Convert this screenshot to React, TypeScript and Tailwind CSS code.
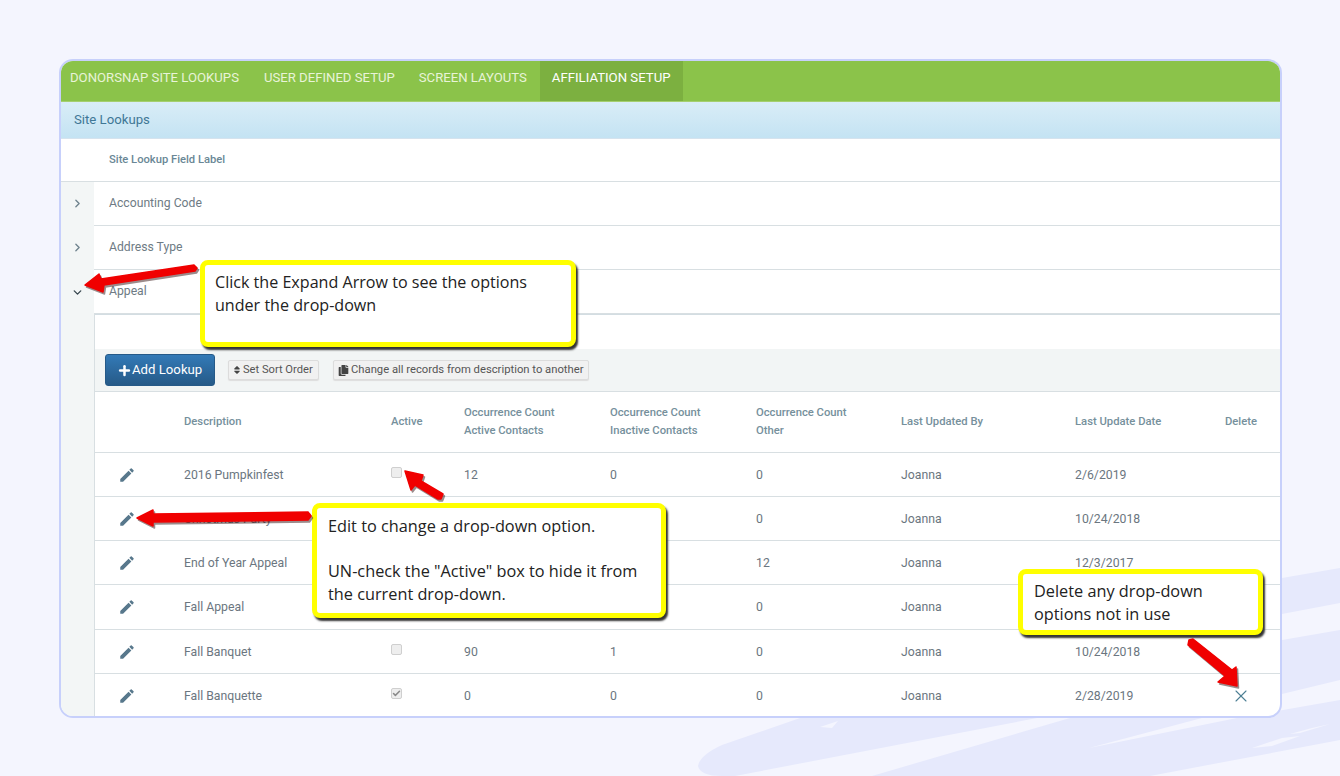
import React from 'react'
import { Check, ChevronDown, ChevronRight, Plus, X } from 'lucide-react'
import { FaCopy, FaSort } from 'react-icons/fa'
import { MdEdit } from 'react-icons/md'

const gridCols = 'grid grid-cols-[89px_207px_73px_146px_146px_145px_174px_150px_1fr] items-center'

const tabs = [
  { label: 'DONORSNAP SITE LOOKUPS', className: 'pl-[9px] pr-[13px]' },
  { label: 'USER DEFINED SETUP', className: 'px-3' },
  { label: 'SCREEN LAYOUTS', className: 'pl-3 pr-[13px]' },
]

// cells left empty are the ones the callouts sit on in the picture
const rows = [
  { name: '2016 Pumpkinfest', box: true, active: false, a: '12', b: '0', c: '0', date: '2/6/2019', h: 'h-[44px]' },
  { name: 'Christmas Party', box: false, active: false, a: '', b: '', c: '0', date: '10/24/2018', h: 'h-[44px]' },
  { name: 'End of Year Appeal', box: false, active: false, a: '', b: '', c: '12', date: '12/3/2017', h: 'h-[44px]' },
  { name: 'Fall Appeal', box: false, active: false, a: '', b: '', c: '0', date: '', h: 'h-[45px]' },
  { name: 'Fall Banquet', box: true, active: false, a: '90', b: '1', c: '0', date: '10/24/2018', h: 'h-[44px]' },
  { name: 'Fall Banquette', box: true, active: true, a: '0', b: '0', c: '0', date: '2/28/2019', h: 'h-[44px]', del: true },
]

function Arrow({ points }: { points: string }) {
  return (
    <>
      <polygon points={points} fill="#3a1a1a" opacity="0.5" transform="translate(1.5 2)" stroke="#3a1a1a" strokeWidth="1.5" strokeLinejoin="round" />
      <polygon points={points} fill="#f00000" stroke="#f00000" strokeWidth="1.5" strokeLinejoin="round" />
    </>
  )
}

function Callout({ className, children }: { className: string; children: React.ReactNode }) {
  return (
    <div className={`absolute z-20 rounded-lg border-[5px] border-[#ffff00] bg-white font-['Open_Sans',sans-serif] leading-[22.7px] text-[#222] shadow-[2px_3px_2px_#333] ${className}`}>
      {children}
    </div>
  )
}

function CheckBox({ checked }: { checked: boolean }) {
  return (
    <span className="-mt-[6px] flex h-[11px] w-[11px] items-center justify-center rounded-[2px] border border-[#cfcfcf] bg-[#eeeeee]">
      {checked && <Check size={9} strokeWidth={4} className="text-[#8a8a8a]" />}
    </span>
  )
}

export default function App() {
  return (
    <div className="relative h-[776px] w-[1340px] overflow-hidden bg-[#f4f5fe] px-[59px] pt-[59px] font-['Roboto',sans-serif]">
      {/* background brush strokes */}
      <svg className="absolute left-0 top-0" width="1340" height="776" viewBox="0 0 1340 776">
        <path d="M803 717 L722 745 Q700 755 698 766 Q700 776 722 776 L735 776 L1037 718 Z" fill="#e6e9fc" />
        <path d="M1070 718 L872 776 L1094 776 L1150 776 L1340 740 L1340 700 L1237 718 L1089 748 L1202 718 Z" fill="#e6e9fc" />
        <path d="M1282 578 L1340 568 L1340 603 L1282 614 Z" fill="#e6e9fc" />
        <path d="M1282 640 L1340 630 L1340 680 L1282 694 Z" fill="#e6e9fc" />
        <path d="M1252 748 L1282 738 L1300 736 L1272 746 Z M1290 734 L1312 728 L1330 724 L1300 733 Z M820 727 L838 721 L832 728 Z" fill="#f4f5fe" />
      </svg>

      {/* main card */}
      <div className="relative z-10 flex h-[659px] w-[1223px] flex-col overflow-hidden rounded-[14px] border-2 border-[#c7d0fb] bg-white">
        <div className="flex h-[41px] shrink-0 border-b border-[#a5cf6f] bg-[#8bc34a] text-[13.15px]">
          {tabs.map((t) => (
            <div key={t.label} className={`flex items-center pb-[7px] text-[#e8f3d8] ${t.className}`}>{t.label}</div>
          ))}
          <div className="flex items-center bg-[#7cb040] px-3 pb-[6px] text-[13.2px] text-white">AFFILIATION SETUP</div>
        </div>
        <div className="flex h-[37px] shrink-0 items-center border-b border-[#d5e3ee] bg-gradient-to-b from-[#d9edf7] to-[#c4e3f3] pl-[13px] text-[13.2px] text-[#3f7796]">
          Site Lookups
        </div>
        <div className="flex h-[43px] shrink-0 items-center border-b border-[#d8dfe2] pl-[48px] text-[11.2px] font-medium text-[#6a8796]">
          Site Lookup Field Label
        </div>

        <div className="flex flex-1">
          <div className="flex w-[33px] shrink-0 flex-col bg-[#f3f6f6]">
            <div className="flex h-[44px] items-center justify-center pb-[1px]"><ChevronRight size={13} strokeWidth={2.5} className="text-[#6f838e]" /></div>
            <div className="flex h-[44px] items-center justify-center pb-[1px]"><ChevronRight size={13} strokeWidth={2.5} className="text-[#6f838e]" /></div>
            <div className="flex h-[44px] items-center justify-center"><ChevronDown size={13} strokeWidth={2.5} className="text-[#37474f]" /></div>
          </div>
          <div className="min-w-0 flex-1">
            {['Accounting Code', 'Address Type', 'Appeal'].map((label) => (
              <div key={label} className="flex h-[44px] items-center border-b border-[#d8dfe2] pl-[15px] text-[12.2px] text-[#6e7b84]">
                {label}
              </div>
            ))}
            <div className="border-l border-[#d8dfe2]">
              <div className="h-[35px] border-t border-[#d3dde2]" />
              <div className="flex h-[43px] items-center border-b border-[#d8dfe2] bg-[#f2f5f5] pl-[10px]">
                <button className="flex h-[32px] w-[110px] items-center rounded-[3px] border border-[#265a88] bg-gradient-to-b from-[#337ab7] to-[#265a88] pl-[11px] text-[13.2px] text-white">
                  <Plus size={15} strokeWidth={4} />
                  Add Lookup
                </button>
                <button className="ml-[13px] flex h-[20px] w-[91px] items-center gap-[1px] rounded-[2px] border border-[#dcdcdc] bg-[#f1f1f1] pl-[3px] text-[11.15px] text-[#555] shadow-[0_1px_1px_#ddd]">
                  <FaSort size={10} className="text-[#444]" />
                  Set Sort Order
                </button>
                <button className="ml-[14px] flex h-[20px] w-[256px] items-center gap-[2px] rounded-[2px] border border-[#dcdcdc] bg-[#f1f1f1] pl-[4px] text-[11.25px] text-[#555] shadow-[0_1px_1px_#ddd]">
                  <FaCopy size={11} className="text-[#444]" />
                  Change all records from description to another
                </button>
              </div>

              <div className={`${gridCols} h-[61px] border-b border-[#d8dfe2] text-[11.25px] font-medium leading-[18px] text-[#76909c]`}>
                <div />
                <div>Description</div>
                <div>Active</div>
                <div>Occurrence Count<br />Active Contacts</div>
                <div>Occurrence Count<br />Inactive Contacts</div>
                <div>Occurrence Count<br />Other</div>
                <div>Last Updated By</div>
                <div>Last Update Date</div>
                <div>Delete</div>
              </div>

              {rows.map((r) => (
                <div key={r.name} className={`${gridCols} ${r.h} border-b border-[#d8dfe2] pt-[1px] text-[12.25px] text-[#6b7680]`}>
                  <div className="-mt-[1px] pl-[23px]"><MdEdit size={18} className="text-[#58788c]" /></div>
                  <div>{r.name}</div>
                  <div>{r.box && <CheckBox checked={r.active} />}</div>
                  <div>{r.a}</div>
                  <div>{r.b}</div>
                  <div>{r.c}</div>
                  <div>Joanna</div>
                  <div>{r.date}</div>
                  <div className="-mt-[1px] pl-[6px]">{r.del && <X size={20} strokeWidth={1.3} className="text-[#4d7f94]" />}</div>
                </div>
              ))}
            </div>
          </div>
        </div>
      </div>

      {/* annotations */}
      <Callout className="left-[200px] top-[260px] h-[87px] w-[376px] pl-[10px] pt-[6px] text-[16.1px]">
        Click the Expand Arrow to see the options<br />under the drop-down
      </Callout>
      <Callout className="left-[312px] top-[503px] h-[115px] w-[354px] pl-[11px] pt-[7px] text-[16.3px]">
        Edit to change a drop-down option.<br /><br />UN-check the "Active" box to hide it from<br />the current drop-down.
      </Callout>
      <Callout className="left-[1018px] top-[569px] h-[66px] w-[245px] pl-[11px] pt-[6px] text-[16.3px]">
        Delete any drop-down<br />options not in use
      </Callout>
      <svg className="pointer-events-none absolute left-0 top-0 z-30" width="1340" height="776" viewBox="0 0 1340 776">
        <Arrow points="85,285 99,274 101,279 194,265 197,268 195,271 104,285 103,292" />
        <Arrow points="405,471 423,475 421,481 443,494 441,499 438,499 415,485 411,490" />
        <Arrow points="137,518 153,510 153,514 308,512 311,516 308,520 153,522 153,526" />
        <Arrow points="1237,686 1218,682 1225,676 1188,645 1189,640 1193,639 1232,670 1236,667" />
      </svg>
    </div>
  )
}
